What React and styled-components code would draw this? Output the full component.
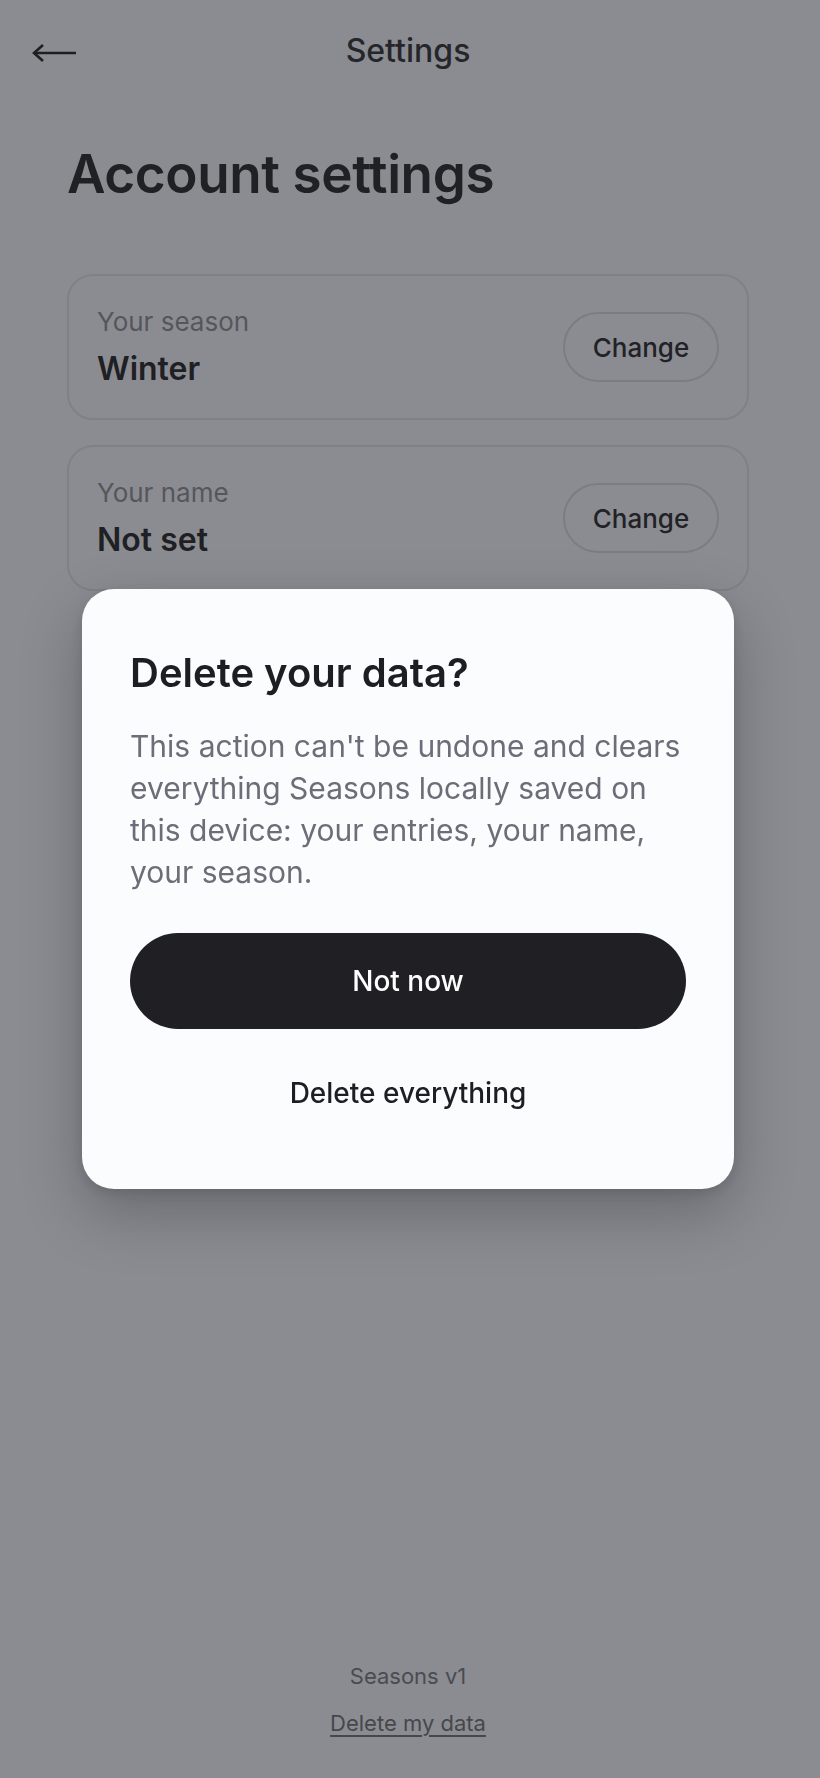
import React from 'react'
import styled, { createGlobalStyle } from 'styled-components'

const GlobalStyle = createGlobalStyle`
  * { box-sizing: border-box; }
  body {
    margin: 0;
    background: #8b8c91;
    font-family: Inter, "Noto Sans", "Liberation Sans", sans-serif;
    -webkit-font-smoothing: antialiased;
  }
`

const Page = styled.div`
  min-height: 100vh;
  display: flex;
  flex-direction: column;
  padding-right: 4px;
`

const Header = styled.header`
  display: grid;
  grid-template-columns: 100px 1fr 100px;
  align-items: center;
  height: 100px;
  padding: 0 32px;
`

const BackButton = styled.button`
  display: flex;
  align-items: center;
  width: 48px;
  height: 48px;
  margin-top: 6px;
  padding: 0;
  border: none;
  background: none;
  color: #1e1f23;
  cursor: pointer;
`

const Title = styled.h1`
  margin: 0;
  text-align: center;
  font-size: 32px;
  font-weight: 500;
  color: #25262a;
`

const Content = styled.main`
  padding: 0 67px;
`

const Heading = styled.h2`
  margin: 42px 0 68px;
  font-size: 53px;
  line-height: 64px;
  font-weight: 600;
  color: #202125;
  letter-spacing: -0.4px;
`

const CardList = styled.div`
  display: flex;
  flex-direction: column;
  gap: 25px;
`

const Card = styled.section`
  display: flex;
  align-items: center;
  justify-content: space-between;
  height: 146px;
  padding: 0 28px;
  border: 2px solid #808186;
  border-radius: 26px;
`

const Field = styled.div`
  display: flex;
  flex-direction: column;
  gap: 11px;
`

const Label = styled.span`
  font-size: 26px;
  line-height: 32px;
  color: #55565c;
`

const Value = styled.span`
  font-size: 32px;
  line-height: 40px;
  font-weight: 600;
  color: #1f2024;
`

const OutlineButton = styled.button`
  width: 156px;
  height: 70px;
  border: 2px solid #7c7d82;
  border-radius: 35px;
  background: transparent;
  font-family: inherit;
  font-size: 26px;
  font-weight: 500;
  color: #212226;
`

const Footer = styled.footer`
  margin-top: auto;
  display: flex;
  flex-direction: column;
  align-items: center;
  gap: 17px;
  padding-bottom: 40px;
`

const Version = styled.span`
  font-size: 22px;
  line-height: 30px;
  color: #4a4b50;
`

const FooterLink = styled.a`
  font-size: 22px;
  line-height: 30px;
  color: #46474c;
  text-decoration: underline;
  text-underline-offset: 4px;
  text-decoration-thickness: 2px;
`

const Overlay = styled.div`
  position: fixed;
  inset: 0;
  display: flex;
  align-items: center;
  justify-content: center;
  padding-right: 4px;
`

const Dialog = styled.div`
  width: 652px;
  padding: 60px 48px 48px;
  background: #fbfcfe;
  border-radius: 32px;
  box-shadow: 0 24px 60px rgba(20, 20, 28, 0.28), 0 4px 14px rgba(20, 20, 28, 0.12);
`

const DialogTitle = styled.h3`
  margin: 0;
  font-size: 40px;
  line-height: 48px;
  font-weight: 600;
  color: #1d1e22;
`

const DialogText = styled.p`
  margin: 28px 0 40px;
  font-size: 30px;
  line-height: 42px;
  color: #6b6e78;
`

const DialogButton = styled.button`
  display: block;
  width: 100%;
  height: 96px;
  border: none;
  border-radius: 48px;
  font-family: inherit;
  font-size: 28px;
  font-weight: 500;
  cursor: pointer;
  background: ${p => (p.$primary ? '#202024' : 'transparent')};
  color: ${p => (p.$primary ? '#ffffff' : '#1d1e22')};
  & + & {
    margin-top: 16px;
  }
`

const BackArrow = () => (
  <svg width="46" height="20" viewBox="0 0 46 20" fill="none">
    <path d="M2 10H44" stroke="currentColor" strokeWidth="2.6" />
    <path d="M11 2L2 10L11 18" stroke="currentColor" strokeWidth="2.6" strokeLinejoin="miter" />
  </svg>
)

const settings = [
  { label: 'Your season', value: 'Winter' },
  { label: 'Your name', value: 'Not set' },
]

export default function App() {
  return (
    <>
      <GlobalStyle />
      <Page>
        <Header>
          <BackButton aria-label="Back">
            <BackArrow />
          </BackButton>
          <Title>Settings</Title>
          <span />
        </Header>
        <Content>
          <Heading>Account settings</Heading>
          <CardList>
            {settings.map(s => (
              <Card key={s.label}>
                <Field>
                  <Label>{s.label}</Label>
                  <Value>{s.value}</Value>
                </Field>
                <OutlineButton>Change</OutlineButton>
              </Card>
            ))}
          </CardList>
        </Content>
        <Footer>
          <Version>Seasons v1</Version>
          <FooterLink>Delete my data</FooterLink>
        </Footer>
      </Page>
      <Overlay>
        <Dialog role="dialog">
          <DialogTitle>Delete your data?</DialogTitle>
          <DialogText>
            This action can't be undone and clears everything Seasons locally saved on this device: your entries, your name, your season.
          </DialogText>
          <DialogButton $primary>Not now</DialogButton>
          <DialogButton>Delete everything</DialogButton>
        </Dialog>
      </Overlay>
    </>
  )
}
